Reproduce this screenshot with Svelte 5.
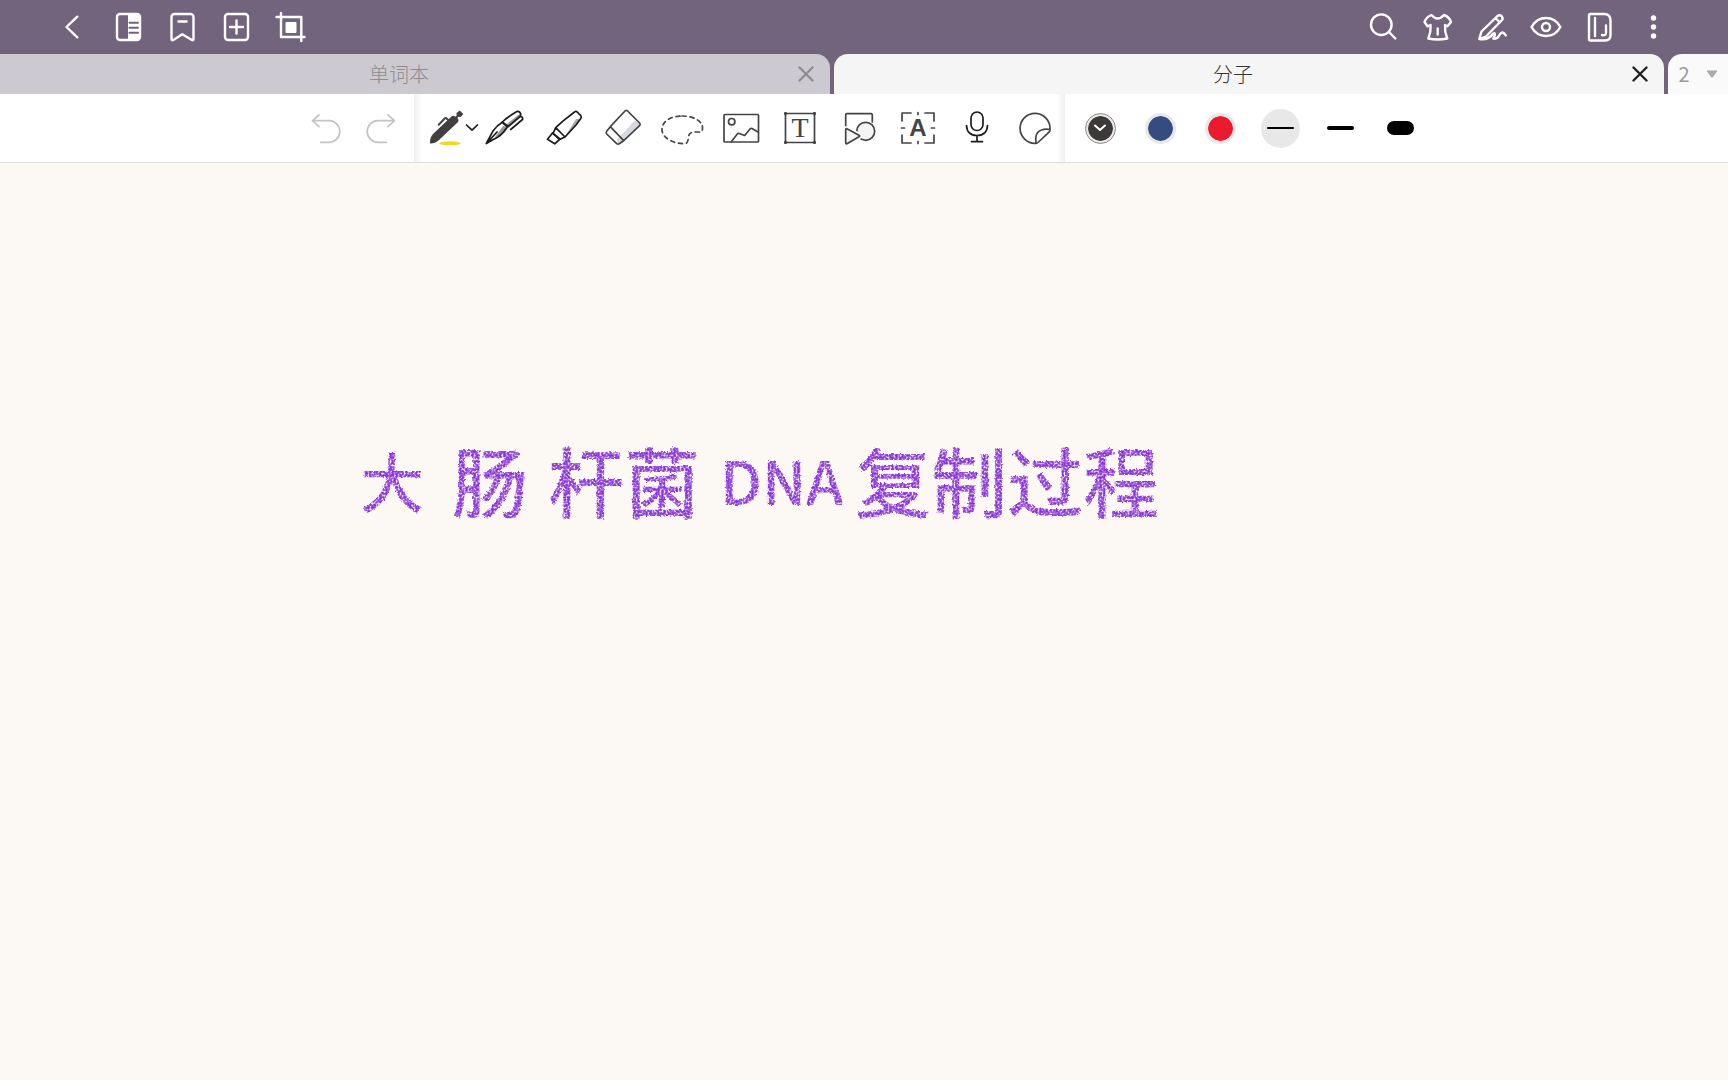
<script lang="ts">
    type Tab = { title: string };

    const tabs: Tab[] = [{ title: "单词本" }, { title: "分子" }];
    const words = ["大", "肠", "杆菌", "DNA", "复制过程"];
    const widths = ["thin", "medium", "thick"];

    let activeTab = $state("分子");
    let activeWidth = $state("thin");
</script>

<svg class="defs" aria-hidden="true">
    <!-- rough edges and paper grain for the crayon pen -->
    <filter id="crayon" x="-5%" y="-5%" width="110%" height="110%">
        <feTurbulence type="fractalNoise" baseFrequency="0.5" numOctaves="2" seed="4" result="grain" />
        <feDisplacementMap in="SourceGraphic" in2="grain" scale="4" xChannelSelector="R" yChannelSelector="G" result="rough" />
        <feColorMatrix in="grain" type="matrix" values="0 0 0 0 0  0 0 0 0 0  0 0 0 0 0  0 0 0 3 -0.7" result="mask" />
        <feComposite in="rough" in2="mask" operator="in" />
        <feGaussianBlur stdDeviation="0.6" />
    </filter>
</svg>

<div class="app">
    <header class="topbar">
        <div class="group">
            <button aria-label="Back">
                <svg viewBox="0 0 36 36"><path d="M21.3 7.7 10.5 18l10.8 10.3" /></svg>
            </button>
            <button aria-label="Pages">
                <svg viewBox="0 0 36 36">
                    <rect x="7" y="5" width="23" height="26" rx="3" />
                    <path class="solid" d="M18 4.5h9a3 3 0 0 1 3 3v21a3 3 0 0 1-3 3h-9z" />
                    <path class="cut" d="M19.5 13.7h8.5M19.5 18.7h8.5M19.5 23.7h8.5" />
                </svg>
            </button>
            <button aria-label="Bookmark">
                <svg viewBox="0 0 36 36">
                    <path d="M10 5h16.5a3 3 0 0 1 3 3v22q0 2-2 .8l-9.2-5.5-8.5 5.5q-2.3 1.2-2.3-.8V8a3 3 0 0 1 3-3zM14.5 12.5h8" />
                </svg>
            </button>
            <button aria-label="Add page">
                <svg viewBox="0 0 36 36">
                    <rect x="7" y="5" width="23" height="26" rx="3" />
                    <path d="M12 18h13M18.5 11.5v13" />
                </svg>
            </button>
            <button aria-label="Crop">
                <svg viewBox="0 0 36 36">
                    <path d="M4.5 8h24.8v24M9 4v24h23.5" />
                    <rect class="solid" x="13.5" y="13" width="11" height="11" rx="1" />
                </svg>
            </button>
        </div>
        <div class="group">
            <button aria-label="Search">
                <svg viewBox="0 0 36 36"><circle cx="16.3" cy="15.7" r="10.3" /><path d="m24 23 6.3 6.5" /></svg>
            </button>
            <button aria-label="Theme">
                <svg viewBox="0 0 36 36">
                    <path d="M12.5 6q6.2 7 12.4 0 5.5 2 7.1 7l-3.5 4.3-2.5-1.3q-.5 7 2.3 13.5-9.6 2-19 0 2.8-6.5 2.3-13.5L8.5 17.3 5.5 13q1.8-5 7-7zM18.7 19.5v6" />
                </svg>
            </button>
            <button aria-label="Pen only">
                <svg viewBox="0 0 36 36">
                    <path d="m6.3 30 2.2-7.5L24.5 7q2-1.5 4 0 2 2 .5 4L13 27.5zM23 9.5l4 4M6.3 30q9 1.5 13.500-5 2.500-2 2 1-.5 2-1.500 3.500 4 1 6.500-4 2.500-4.500 6 .8" />
                </svg>
            </button>
            <button aria-label="View">
                <svg viewBox="0 0 36 36">
                    <path d="M4.5 18q5-9 14.5-9t14.3 9q-4.8 9-14.3 9T4.5 18z" />
                    <circle cx="19" cy="18" r="4" />
                </svg>
            </button>
            <button aria-label="Notebook">
                <svg viewBox="0 0 36 36">
                    <path d="M9.5 5H23q6.5 0 6.500 6.500V26q0 5.500-5.500 5.500H9.500q-1.500 0-1.500-1.500V6.500Q8 5 9.500 5zM14 9v18M25 16.500V24q0 3-4 2" />
                </svg>
            </button>
            <button aria-label="More">
                <svg class="filled" viewBox="0 0 36 36">
                    <circle cx="18.5" cy="9" r="2.7" /><circle cx="18.5" cy="18" r="2.7" /><circle cx="18.5" cy="27" r="2.7" />
                </svg>
            </button>
        </div>
    </header>

    <nav class="tabs">
        {#each tabs as tab}
            <div class="tab" class:active={activeTab === tab.title}>
                <button class="title" onclick={() => (activeTab = tab.title)}>{tab.title}</button>
                <button class="close" aria-label="Close {tab.title}">
                    <svg viewBox="0 0 16 16"><path d="m1.5 1.5 13 13m0-13-13 13" /></svg>
                </button>
            </div>
        {/each}
        <button class="count">
            <span>2</span>
            <svg viewBox="0 0 12 8"><path d="M1.5.5h9q1 0 .5 1L7 7Q6 8 5 7L1 1.5q-.5-1 .5-1z" /></svg>
        </button>
    </nav>

    <div class="toolbar">
        <div class="history">
            <button aria-label="Undo">
                <svg viewBox="0 0 44 44"><path d="m15 9-6.5 5.700 6.500 6M8.500 14.700H25a10.800 10.800 0 0 1 0 21.600h-8.300" /></svg>
            </button>
            <button aria-label="Redo">
                <svg viewBox="0 0 44 44"><path d="m29 9 6.500 5.700-6.500 6M35.500 14.700H19a10.800 10.800 0 0 0 0 21.600h8.300" /></svg>
            </button>
        </div>

        <div class="tools">
            <button aria-label="Ballpoint pen">
                <svg viewBox="0 0 44 44">
                    <ellipse cx="26" cy="37.3" rx="11" ry="2" fill="#f3d52b" stroke="none" />
                    <path d="M6 37.500q-.3-6 3-9.500L27.500 10.500q2-1.500 4 .3l1.200-1.300-.2-2.500 3.200-2.500 3.500 3.500-2.400 3-2.300-.2-1.200 1.300q2.200 2.200.5 4.200L15 34q-3.500 3.500-9 3.500z" fill="#413f3f" stroke="none" />
                    <path d="m14.700 18.700 6-6.200q1-1 2 0l1.500 1.500" stroke-width="2" />
                    <path d="m42.500 19 5.500 5.200 5.500-5.200" stroke="#1c1c1c" />
                </svg>
            </button>
            <button aria-label="Fountain pen">
                <svg class="dark" viewBox="0 0 44 44">
                    <path d="m12 31 8-11 4.300 1-9 9.500zM23 18.500 36.500 8l.7 2.500-12 10z" fill="#999" stroke="none" />
                    <path d="m3.300 37.500 6.500-12.200q4-5.800 9.500-9l5 4.700q-4 6.500-9 9.700zM4 37l10-11" />
                    <path d="m19.300 16 6 4.700L37 10.500q1.500-2 0-4-2-1.800-4-.5-9 5.500-13.700 10zM37.700 10.500q2.500.5 1.800 3L27.700 23.500" />
                </svg>
            </button>
            <button aria-label="Highlighter">
                <svg class="dark" viewBox="0 0 44 44">
                    <path d="M23 30.700 34 13h4.500L33 20z" fill="#aaa" stroke="none" />
                    <path d="M32.500 6q1.300-1.200 2.700 0l3.600 3.700q1 1.300 0 2.700L34 19 23 31l-9.300-9.300 7.200-6.500zM13.700 21.700 11 27.500l6.500 6L23 31M10.500 27l-5 6.300 7.200 4.500L18 33" />
                    <path d="m10.500 27 7.500 6" />
                </svg>
            </button>
            <button aria-label="Eraser">
                <svg viewBox="0 0 44 44">
                    <path d="M34 14.500 39.300 18.500 17.300 38.300l-1.500-4.500z" fill="#d5d8df" stroke="none" />
                    <path d="M24 5q1.300-1.200 2.600 0l12 12q1.200 1.300 0 2.600L22.700 34.700l-13.400-14zM9.300 20.700l-3.600 4.600q-1 1.400 0 2.700l10 9.700q1.300 1 2.600 0l4.400-3" />
                </svg>
            </button>
            <button aria-label="Lasso">
                <svg viewBox="0 0 44 44">
                    <path d="M22 10c12 0 21 5.500 20.500 12 0 4.500-2 4-6 4-5.500 0-7.500 1-8 5-.5 5-1.500 6.700-4 6.700C12 37.700 2 31.500 2 23.500S10.500 10 22 10z" stroke-dasharray="4 4" />
                </svg>
            </button>
            <button aria-label="Image">
                <svg viewBox="0 0 44 44">
                    <rect x="5" y="8.5" width="34.5" height="27.5" rx="1" />
                    <circle cx="12.7" cy="15.7" r="3.2" />
                    <path d="m12.300 35.700 6-7.700q.7-1 2-.5l5.400 2 5.300-6.500q1-1 2-.5l6 3.500" />
                </svg>
            </button>
            <button aria-label="Text">
                <svg viewBox="0 0 44 44">
                    <rect x="7.5" y="7.5" width="29" height="29" />
                    <path d="M7 7h1v1H7zM36 7h1v1h-1zM7 36h1v1H7zM36 36h1v1h-1z" stroke-width="2" />
                    <text class="serif" x="22" y="31">T</text>
                </svg>
            </button>
            <button aria-label="Shapes">
                <svg viewBox="0 0 44 44">
                    <path d="M8.700 20V9q0-1.300 1.300-1.300h24q1.300 0 1.300 1.300v7" />
                    <circle cx="28.7" cy="25.3" r="9" fill="#f5f5f5" />
                    <path d="M8.700 24q0-2 1.700-1l11.600 6.200q1.500.8 0 1.600L10.400 37.600q-1.700 1-1.700-1z" stroke="#fff" stroke-width="5" />
                    <path d="M8.700 24q0-2 1.700-1l11.600 6.200q1.500.8 0 1.600L10.400 37.600q-1.700 1-1.700-1z" fill="#f5f5f5" />
                </svg>
            </button>
            <button aria-label="Text recognition">
                <svg viewBox="0 0 44 44">
                    <path d="M6 15V7h9M29 7h9v8M38 29v8h-9M15 37H6v-8M22 6.500v2M22 35.500v2M5.500 22h3M35.500 22h3" />
                    <text class="sans" x="22" y="30">A</text>
                </svg>
            </button>
            <button aria-label="Record">
                <svg class="dark" viewBox="0 0 44 44">
                    <rect x="16" y="6" width="12" height="18.5" rx="6" />
                    <path d="M11.500 19.500q.5 10 10.500 10t10.500-10M22 29.500v6M16.500 35.700h11" />
                </svg>
            </button>
            <button aria-label="Sticker">
                <svg viewBox="0 0 44 44">
                    <path d="M36 23.500A15 15 0 1 0 22 37.300q-1.800-11 5.500-13.300 4-1.500 8.500-.5zM36 23.500q.2 1.500-1 2.700L24 36.500q-1 .9-2 .8" />
                </svg>
            </button>
        </div>

        <div class="styles">
            <button aria-label="Black">
                <span class="swatch black">
                    <svg viewBox="0 0 12 8"><path d="m1 1.500 5 4.500 5-4.500" /></svg>
                </span>
            </button>
            <button aria-label="Blue"><span class="swatch blue"></span></button>
            <button aria-label="Red"><span class="swatch red"></span></button>
            {#each widths as width}
                <button aria-label={width} onclick={() => (activeWidth = width)}>
                    <span class="width" class:selected={activeWidth === width}><i class={width}></i></span>
                </button>
            {/each}
        </div>
    </div>

    <main class="page">
        <h1 class="ink">
            {#each words as word}
                <span class:small={word === "大"} class:latin={word === "DNA"}>{word}</span>
            {/each}
        </h1>
    </main>
</div>

<style>
    :global(body) {
        margin: 0;
        background: #fcf9f4;
    }

    .defs {
        position: absolute;
        width: 0;
        height: 0;
    }

    .app {
        min-height: 100vh;
        display: flex;
        flex-direction: column;
        background: #fcf9f4;
        font-family: "Noto Sans CJK SC", sans-serif;
    }

    button {
        display: flex;
        align-items: center;
        justify-content: center;
        padding: 0;
        border: 0;
        background: none;
        font-family: inherit;
        cursor: pointer;
    }

    svg {
        display: block;
        fill: none;
        stroke-linecap: round;
        stroke-linejoin: round;
    }

    .topbar {
        display: flex;
        justify-content: space-between;
        height: 54px;
        padding: 0 48px 0 47px;
        box-sizing: border-box;
        background: #72647c;
    }

    .group {
        display: flex;
    }

    .group button {
        width: 54px;
    }

    .group svg {
        width: 36px;
        height: 36px;
        stroke: #fff;
        stroke-width: 2.4;
    }

    .group .solid {
        fill: #fff;
        stroke: none;
    }

    .group .cut {
        stroke: #72647c;
        stroke-width: 2;
    }

    .group .filled {
        fill: #fff;
        stroke: none;
    }

    .tabs {
        display: flex;
        gap: 4px;
        height: 40px;
        background: #72647c;
    }

    .tab {
        flex: 1;
        display: flex;
        padding-right: 16px;
        border-radius: 0 14px 0 0;
        background: #cdc9d0;
        color: #8f8c91;
    }

    .tab.active {
        border-radius: 14px 14px 0 0;
        background: #f5f5f5;
        color: #333;
    }

    .tab .title {
        flex: 1;
        color: inherit;
        font-size: 20px;
        font-weight: 300;
        line-height: 28px;
    }

    .tab .close {
        width: 16px;
    }

    .tab .close svg {
        width: 16px;
        height: 16px;
        stroke: #8f8c91;
        stroke-width: 2.4;
    }

    .tab.active .close svg {
        stroke: #222;
    }

    .count {
        width: 60px;
        gap: 16px;
        border-radius: 14px 0 0 0;
        background: #fafafa;
        color: #999;
        font-size: 20px;
        font-weight: 400;
        line-height: 28px;
    }

    .count svg {
        width: 12px;
        height: 8px;
        fill: #aaa;
    }

    .toolbar {
        display: flex;
        justify-content: center;
        height: 68px;
        border-bottom: 1px solid #dcdcdc;
        background: #fff;
    }

    .toolbar svg {
        width: 44px;
        height: 44px;
        overflow: visible;
        stroke: #444;
        stroke-width: 1.7;
    }

    .history,
    .tools,
    .styles {
        display: flex;
    }

    .history {
        padding-right: 6px;
    }

    .history button {
        width: 55px;
    }

    .toolbar .history svg {
        stroke: #c4c4c4;
    }

    .tools {
        padding-left: 2px;
        background: linear-gradient(to right, #efefef, #fff 8px, #fff calc(100% - 8px), #efefef);
    }

    .tools button {
        width: 59px;
    }

    .toolbar .dark {
        stroke: #1c1c1c;
    }

    .tools text {
        fill: #444;
        stroke: none;
        text-anchor: middle;
        font-size: 24px;
    }

    .tools .serif {
        font-family: "Liberation Serif", serif;
        font-size: 28px;
    }

    .tools .sans {
        font-family: "Liberation Sans", sans-serif;
        font-weight: 700;
    }

    .styles {
        padding-left: 5px;
    }

    .styles button {
        width: 60px;
    }

    .swatch {
        display: flex;
        align-items: center;
        justify-content: center;
        width: 25px;
        height: 25px;
        border: 3px solid #e8e8e8;
        border-radius: 50%;
    }

    .swatch.black {
        border-width: 2px;
        background: #3d3938;
        background-clip: padding-box;
        outline: 1px solid #888;
    }

    .swatch.blue {
        background: #344c80;
        background-clip: padding-box;
    }

    .swatch.red {
        background: #eb1a2f;
        background-clip: padding-box;
    }

    .toolbar .swatch svg {
        width: 12px;
        height: 8px;
        stroke: #fff;
        stroke-width: 2;
    }

    .width {
        display: flex;
        align-items: center;
        justify-content: center;
        width: 39px;
        height: 39px;
        border-radius: 50%;
    }

    .width.selected {
        background: #e8e8e8;
    }

    .width i {
        width: 27px;
        height: 4px;
        border-radius: 7px;
        background: #000;
    }

    .width .thin {
        height: 2px;
    }

    .width .thick {
        height: 14px;
    }

    .page {
        flex: 1;
        padding: 276px 24px 24px 360px;
    }

    .ink {
        display: flex;
        align-items: center;
        gap: 20px;
        margin: 0;
        color: #8a34dc;
        font-size: 76px;
        font-weight: 500;
        line-height: 80px;
        white-space: nowrap;
        filter: url(#crayon);
    }

    .ink .small {
        margin-right: 8px;
        font-size: 64px;
    }

    .ink .latin {
        margin-right: -8px;
        font-size: 60px;
    }
</style>
